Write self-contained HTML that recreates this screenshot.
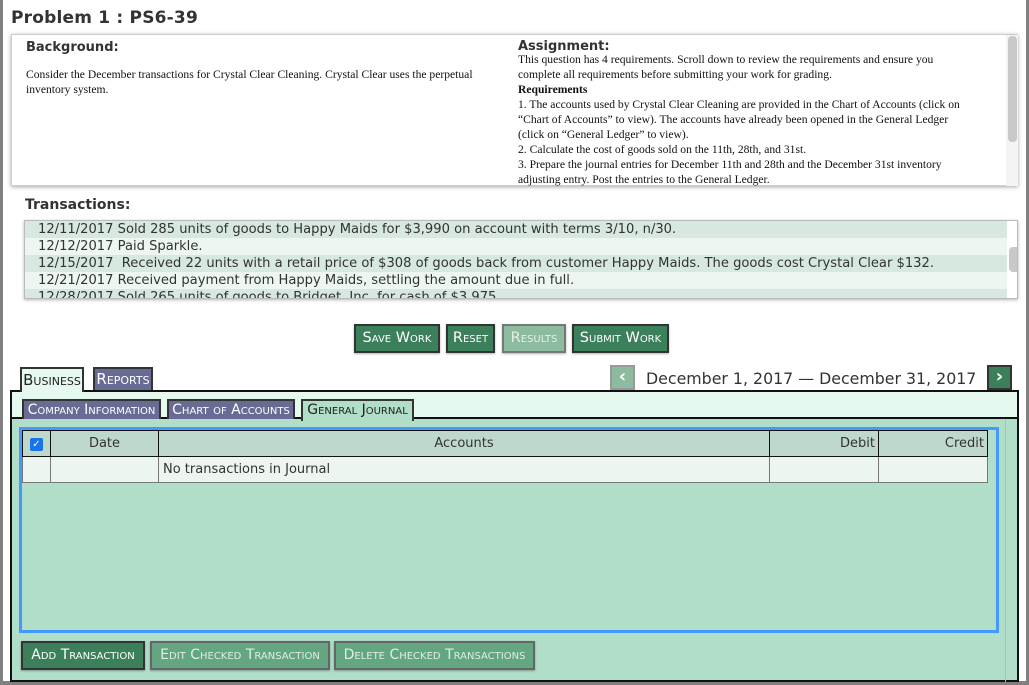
<!DOCTYPE html>
<html><head><style>
*{margin:0;padding:0;box-sizing:border-box}
body{width:1029px;height:685px;background:#808080;position:relative;overflow:hidden;font-family:"DejaVu Sans","Liberation Sans",sans-serif;color:#222}
#pg{position:absolute;left:3px;top:0;width:1023px;height:681px;background:#fff}
.a{position:absolute}
h1{position:absolute;left:8px;top:8px;font-size:17px;font-weight:bold;color:#333;letter-spacing:0.2px}
.box{position:absolute;left:8px;top:34px;width:1007px;height:152px;background:#fff;border:1px solid #ccc;box-shadow:0 1px 4px rgba(0,0,0,.35)}
.ser{font-family:"Liberation Serif",serif;font-size:11.6px;line-height:15px;color:#111}
.sb{position:absolute;background:#c8c8c8;border-radius:4px}
.tr{position:absolute;left:21px;top:220px;width:994px;height:79px;border:1px solid #bbb;box-shadow:0 1px 3px rgba(0,0,0,.3);overflow:hidden;background:#fff}
.tr div{height:17px;font-size:13.1px;line-height:17px;padding-left:13px;white-space:nowrap;color:#333;width:982px}
.o{background:#d6e8df}.e{background:#edf6f1}
.btn{position:absolute;height:29px;border:2px solid #333;background:#3b7f5b;color:#fff;font-size:14.5px;line-height:25px;text-align:center;font-variant:small-caps;box-shadow:0 1px 2px rgba(0,0,0,.3);white-space:nowrap}
.dis{background:#8dbba0;border-color:#777;color:#e3f1e9}
.dis2{background:#64a682;border-color:#666;color:#dcefe4}
.tab{position:absolute;font-variant:small-caps;font-size:15px;border:2px solid #333;border-bottom:none;text-align:center;white-space:nowrap}
.ptab{background:#686c95;color:#fff}
table{border-collapse:collapse;position:absolute;left:19px;top:430px;width:966px;font-size:13px;color:#333}
td{height:26px;border:1px solid #777}
</style></head><body>
<div id="pg">
<h1>Problem 1 : PS6-39</h1>
<div class="box">
 <div class="a" style="left:14px;top:5px;font-size:13px;font-weight:bold;color:#333">Background:</div>
 <div class="a ser" style="left:14px;top:32px;width:470px">Consider the December transactions for Crystal Clear Cleaning. Crystal Clear uses the perpetual inventory system.</div>
 <div class="a" style="left:506px;top:5px;font-size:13px;font-weight:bold;color:#333;line-height:13px">Assignment:</div>
 <div class="a ser" style="left:506px;top:17px;width:444px">This question has 4 requirements. Scroll down to review the requirements and ensure you complete all requirements before submitting your work for grading.<br><b>Requirements</b><br>1. The accounts used by Crystal Clear Cleaning are provided in the Chart of Accounts (click on “Chart of Accounts” to view). The accounts have already been opened in the General Ledger (click on “General Ledger” to view).<br>2. Calculate the cost of goods sold on the 11th, 28th, and 31st.<br>3. Prepare the journal entries for December 11th and 28th and the December 31st inventory adjusting entry. Post the entries to the General Ledger.</div>
 <div class="a" style="left:994px;top:0;width:12px;height:151px;background:#f4f4f4"></div>
 <div class="sb" style="left:996px;top:1px;width:9px;height:106px"></div>
</div>
<div class="a" style="left:22px;top:197px;font-size:14px;font-weight:bold;color:#333">Transactions:</div>
<div class="tr">
 <div class="o">12/11/2017 Sold 285 units of goods to Happy Maids for $3,990 on account with terms 3/10, n/30.</div>
 <div class="e">12/12/2017 Paid Sparkle.</div>
 <div class="o">12/15/2017&nbsp; Received 22 units with a retail price of $308 of goods back from customer Happy Maids. The goods cost Crystal Clear $132.</div>
 <div class="e">12/21/2017 Received payment from Happy Maids, settling the amount due in full.</div>
 <div class="o">12/28/2017 Sold 265 units of goods to Bridget, Inc. for cash of $3,975.</div>
 <div class="a" style="left:983px;top:0;width:10px;height:79px;background:#fff"></div>
 <div class="sb" style="left:984px;top:26px;width:9px;height:25px"></div>
</div>
<div class="btn" style="left:351px;top:324px;width:86px">Save Work</div>
<div class="btn" style="left:443px;top:324px;width:49px">Reset</div>
<div class="btn dis" style="left:499px;top:324px;width:64px">Results</div>
<div class="btn" style="left:569px;top:324px;width:97px">Submit Work</div>
<div class="tab" style="left:17px;top:367px;width:64px;height:25px;background:#e6f9ef;color:#222;line-height:23px;z-index:2">Business</div>
<div class="tab ptab" style="left:90px;top:367px;width:60px;height:23px;line-height:21px">Reports</div>
<div class="a" style="left:607px;top:365px;width:25px;height:25px;background:#8dbba0;border:2px solid #999;color:#fff;font-weight:bold;text-align:center;line-height:20px;font-size:18px">‹</div>
<div class="a" style="left:643px;top:369px;font-size:15.8px;color:#333;white-space:nowrap">December 1, 2017 — December 31, 2017</div>
<div class="a" style="left:984px;top:365px;width:25px;height:25px;background:#3b7f5b;border:2px solid #333;color:#fff;font-weight:bold;text-align:center;line-height:20px;font-size:18px">›</div>
<div class="a" style="left:7px;top:390px;width:1009px;height:292px;border:2px solid #111;background:#b0dec9">
 <div class="a" style="left:0;top:0;width:1005px;height:27px;background:#e6f9ef;border-bottom:2px solid #111"></div>
 <div class="tab ptab" style="left:10px;top:7px;width:139px;height:20px;line-height:18px;font-size:14px">Company Information</div>
 <div class="tab ptab" style="left:155px;top:7px;width:128px;height:20px;line-height:18px;font-size:14px">Chart of Accounts</div>
 <div class="tab" style="left:289px;top:7px;width:113px;height:22px;line-height:18px;font-size:14px;background:#b0dec9;color:#222;z-index:2">General Journal</div>
 <div class="a" style="left:993px;top:27px;width:1px;height:263px;background:#9ccab5"></div>
 <div class="a" style="left:7px;top:35px;width:980px;height:206px;border:3px solid #4499ff"></div>
</div>
<table>
 <tr style="background:#bed8cc;border:1px solid #111"><td style="width:28px;border-color:#111;text-align:center"><span style="display:inline-block;width:13px;height:13px;background:#1a73e8;border-radius:2px;color:#fff;font-size:10px;line-height:13px;font-weight:bold">✓</span></td><td style="width:108px;text-align:center;border-color:#111">Date</td><td style="width:611px;text-align:center;border-color:#111">Accounts</td><td style="width:109px;text-align:right;padding-right:3px;border-color:#111">Debit</td><td style="text-align:right;padding-right:3px;border-color:#111">Credit</td></tr>
 <tr style="background:#edf5f0"><td></td><td></td><td style="padding-left:4px">No transactions in Journal</td><td></td><td></td></tr>
</table>
<div class="btn" style="left:18px;top:641px;width:124px;font-size:14px">Add Transaction</div>
<div class="btn dis2" style="left:147px;top:641px;width:180px;font-size:14px">Edit Checked Transaction</div>
<div class="btn dis2" style="left:331px;top:641px;width:201px;font-size:14px">Delete Checked Transactions</div>
</div>
</body></html>
